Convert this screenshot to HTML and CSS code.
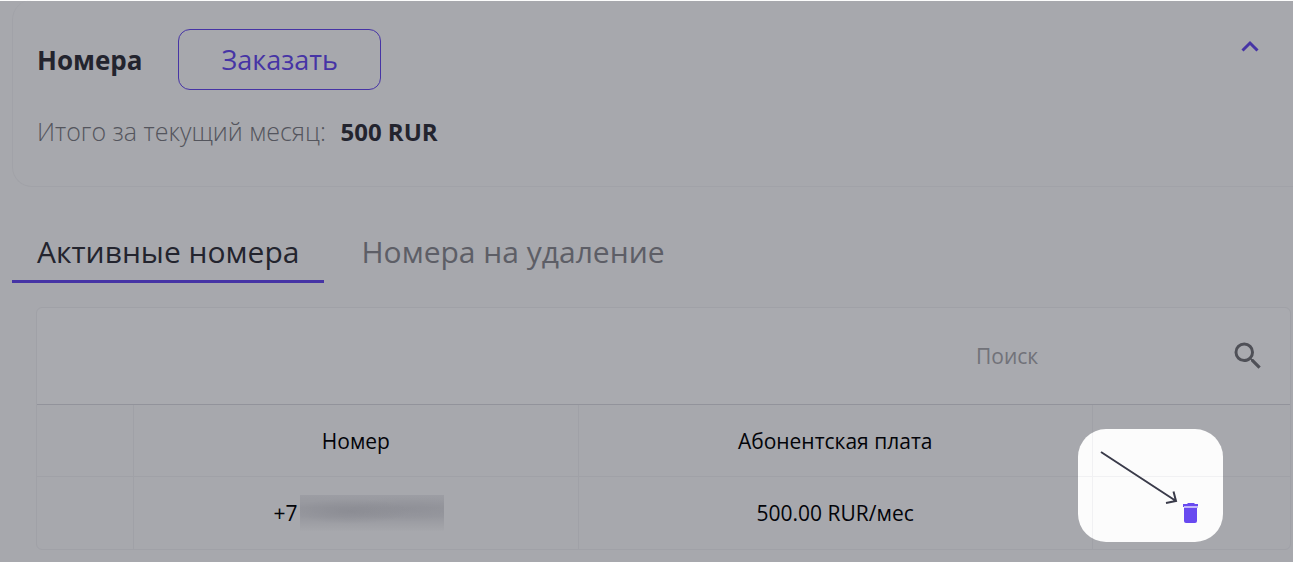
FILE: index.html
```html
<!DOCTYPE html>
<html lang="ru">
<head>
    <meta charset="UTF-8" />
    <meta name="viewport" content="width=device-width, initial-scale=1.0" />
    <title>Номера</title>
    <link rel="stylesheet" href="styles.css">
</head>
<body>
    <main class="page">
        <section class="summary">
            <div class="summary-info">
                <div class="summary-head">
                    <h1>Номера</h1>
                    <button type="button" class="order-btn">Заказать</button>
                </div>
                <p class="total">Итого за текущий месяц: <strong>500 RUR</strong></p>
            </div>
            <button type="button" class="icon-btn" aria-label="Свернуть">
                <svg width="18" height="12" viewBox="0 0 18 12">
                    <path d="M1.5 10.5L9 3l7.5 7.5" fill="none" stroke="currentColor" stroke-width="3" />
                </svg>
            </button>
        </section>

        <nav class="tabs">
            <button type="button" class="tab active">Активные номера</button>
            <button type="button" class="tab">Номера на удаление</button>
        </nav>

        <section class="numbers">
            <form class="search">
                <input type="text" placeholder="Поиск" aria-label="Поиск">
                <button type="button" class="icon-btn search-btn" aria-label="Найти">
                    <svg width="36" height="36" viewBox="0 0 24 24" fill="currentColor">
                        <path d="M15.5 14h-.79l-.28-.27A6.47 6.47 0 0 0 16 9.5 6.5 6.5 0 1 0 9.5 16c1.61 0 3.09-.59 4.23-1.57l.27.28v.79l5 4.99L20.49 19l-4.99-5zm-6 0C7.01 14 5 11.99 5 9.5S7.01 5 9.5 5 14 7.01 14 9.5 11.99 14 9.5 14z" />
                    </svg>
                </button>
            </form>
            <table>
                <colgroup>
                    <col class="col-check">
                    <col class="col-number">
                    <col class="col-fee">
                    <col class="col-action">
                </colgroup>
                <thead>
                    <tr>
                        <th></th>
                        <th>Номер</th>
                        <th>Абонентская плата</th>
                        <th></th>
                    </tr>
                </thead>
                <tbody>
                    <tr>
                        <td></td>
                        <td>
                            <div class="phone">+7<span class="hidden-number"></span></div>
                        </td>
                        <td>500.00 RUR/мес</td>
                        <td>
                            <button type="button" class="icon-btn" aria-label="Удалить">
                                <svg width="16" height="20" viewBox="0 0 16 20" fill="currentColor">
                                    <path d="M5 0h6l1 1h3v3H0V1h4z" />
                                    <path d="M1 3h14v2H1z" fill="#c3b8fa" />
                                    <path d="M1 5h13v13a2 2 0 0 1-2 2H3a2 2 0 0 1-2-2z" />
                                </svg>
                            </button>
                        </td>
                    </tr>
                </tbody>
            </table>
        </section>
    </main>

    <!-- Затемнение с подсветкой кнопки удаления -->
    <div class="overlay">
        <div class="spotlight">
            <svg width="145" height="113" viewBox="0 0 145 113">
                <path d="M23 23L98 72M95.500 62.500L98 72L88 74" fill="none" stroke="#3a3b4a" stroke-width="2" />
            </svg>
        </div>
    </div>
</body>
</html>
```

FILE: styles.css
```css
* {
    box-sizing: border-box;
    margin: 0;
    padding: 0;
}

body {
    position: relative;
    min-height: 100vh;
    overflow-x: hidden;
    background: #fcfcfc;
    color: #32323a;
    font-family: "Open Sans", "Noto Sans", sans-serif;
}

button,
input {
    border: none;
    background: none;
    font-family: inherit;
}

button {
    cursor: pointer;
}

svg {
    display: block;
}

.page {
    padding-left: 12px;
}

/* Итог по номерам */
.summary {
    display: flex;
    justify-content: space-between;
    align-items: flex-start;
    padding: 29px 34px 38px 24px;
    border: 1px solid #f3f3f4;
    border-width: 0 0 1px 1px;
    border-radius: 20px 0 0 20px;
}

.summary-head {
    display: flex;
    align-items: center;
    gap: 36px;
}

h1 {
    font-size: 26px;
    line-height: 36px;
    font-weight: 700;
}

.order-btn {
    height: 61px;
    padding: 0 42px;
    border: 1px solid #684af0;
    border-radius: 12px;
    color: #684af0;
    font-size: 27px;
}

.total {
    margin-top: 25px;
    color: #7d7d82;
    font-size: 25px;
    line-height: 32px;
    font-weight: 300;
}

.total strong {
    margin-left: 8px;
    color: #32323a;
    font-size: 24px;
    font-weight: 700;
}

.icon-btn {
    color: #684af0;
}

.summary .icon-btn {
    margin-top: 11px;
}

/* Вкладки */
.tabs {
    display: flex;
    gap: 12px;
    margin-top: 36px;
}

.tab {
    height: 60px;
    padding: 0 25px;
    border-bottom: 3px solid transparent;
    color: #8b8b90;
    font-size: 30px;
}

.tab.active {
    border-color: #684af0;
    color: #32323a;
}

/* Таблица номеров */
.numbers {
    margin: 24px 2px 0 24px;
    border: 1px solid #f1f1f3;
    border-radius: 6px;
}

.search {
    display: flex;
    justify-content: flex-end;
    align-items: center;
    gap: 12px;
    height: 97px;
    padding-right: 24px;
    border-bottom: 1px solid #dcdce0;
    border-radius: 6px 6px 0 0;
    background: #fff;
}

.search input {
    width: 242px;
    height: 48px;
    font-size: 21px;
    color: #32323a;
}

.search input::placeholder {
    color: #aaaaad;
}

.search-btn {
    color: #757579;
}

table {
    width: 100%;
    table-layout: fixed;
    border-collapse: separate;
    border-spacing: 0;
    color: #000;
    font-size: 21px;
}

.col-check {
    width: 96px;
}

.col-number {
    width: 35.5%;
}

.col-fee {
    width: 41%;
}

th,
td {
    height: 72px;
    text-align: center;
    vertical-align: middle;
    font-weight: 400;
}

th {
    border-bottom: 1px solid #f1f1f3;
}

th + th,
td + td {
    border-left: 1px solid #f1f1f3;
}

td .icon-btn {
    display: block;
    margin: 0 auto;
}

.phone {
    display: flex;
    justify-content: center;
    align-items: center;
    gap: 3px;
    padding-left: 6px;
}

.hidden-number {
    width: 144px;
    height: 36px;
    background:
        radial-gradient(ellipse at 35% 45%, rgba(200, 200, 204, 0.6), transparent 45%),
        radial-gradient(ellipse at 75% 40%, rgba(208, 208, 212, 0.5), transparent 40%),
        linear-gradient(#ececee, #e0e0e2 35%, #e4e4e6 60%, #fafafa);
}

.overlay {
    position: absolute;
    inset: 1px 0 0 0;
    overflow: hidden;
    pointer-events: none;
}

.spotlight {
    position: absolute;
    top: 428px;
    right: 70px;
    border-radius: 28px;
    box-shadow: 0 0 0 3000px rgba(9, 12, 26, 0.35);
}
```
